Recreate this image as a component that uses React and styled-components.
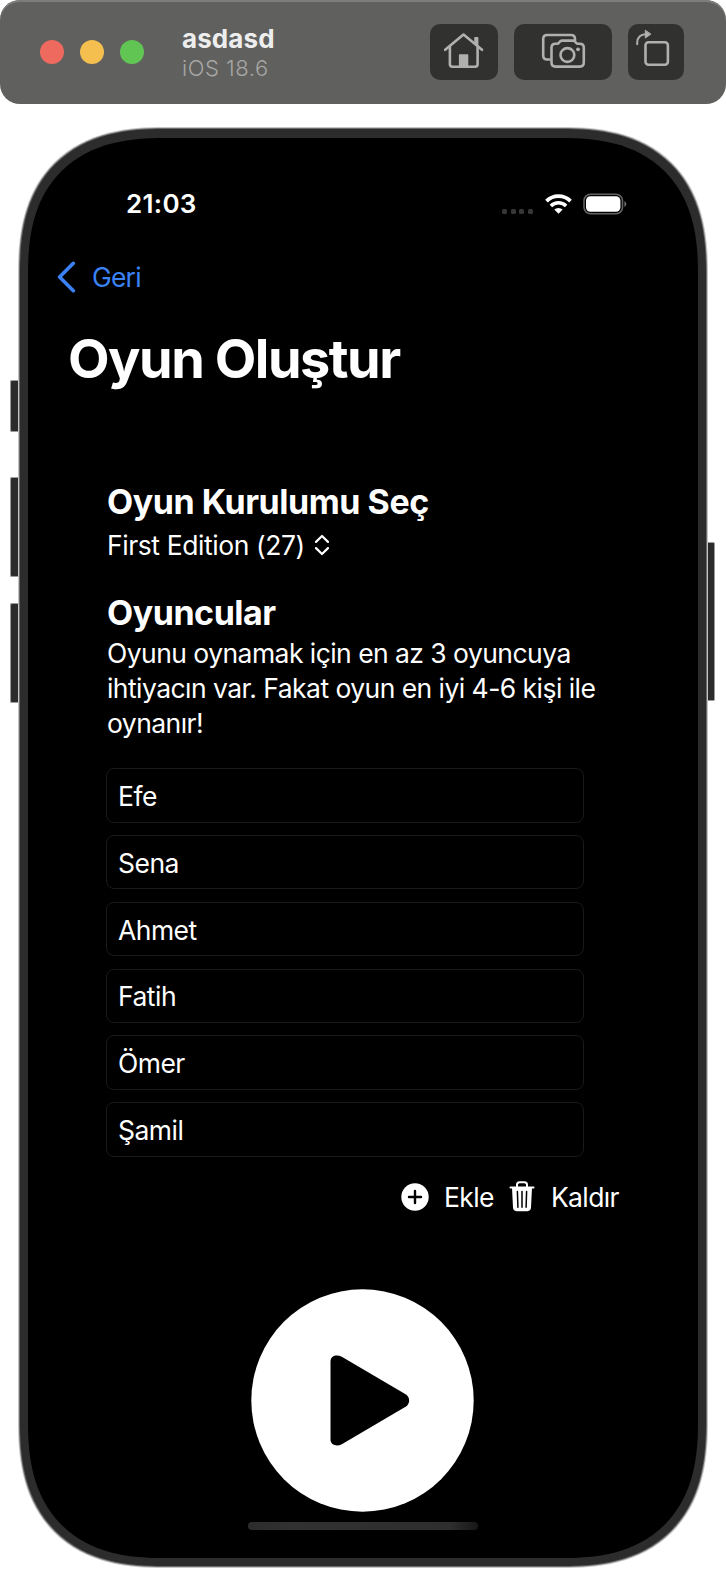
import React from "react";
import styled, { createGlobalStyle, css } from "styled-components";

const GlobalStyle = createGlobalStyle`
  * { box-sizing: border-box; }
  body {
    margin: 0;
    background: #fff;
    font-family: Inter, "Liberation Sans", sans-serif;
    color: #fff;
  }
  button { font: inherit; color: inherit; border: 0; padding: 0; background: none; }
  h1, h2, p { margin: 0; }
  svg { display: block; flex: none; }
`;

/* Continuous corner, with a plain round one where corner-shape is missing */
const deviceCorner = (inset) => css`
  border-radius: ${124 - inset}px;
  @supports (corner-shape: superellipse(1.3)) {
    border-radius: ${146 - inset}px;
    corner-shape: superellipse(1.3);
  }
`;

const Page = styled.div`
  width: 726px;
  height: 1572px;
  overflow: hidden;
`;

/* Simulator window bar */
const TitleBar = styled.header`
  display: flex;
  align-items: center;
  height: 104px;
  padding: 0 42px 0 40px;
  border-radius: 20px;
  background: #60605e;
  box-shadow: inset 0 2px 0 #7d7d7b;
`;

const Lights = styled.div`
  display: flex;
  gap: 16px;
`;

const Light = styled.span`
  width: 24px;
  height: 24px;
  border-radius: 50%;
  background: ${(p) => p.$color};
`;

const WindowInfo = styled.div`
  flex: 1;
  margin-left: 38px;
  padding-top: 2px;
`;

const WindowName = styled.div`
  font-size: 26px;
  line-height: 30px;
  font-weight: 700;
  letter-spacing: 0.1px;
  color: #ededed;
`;

const WindowOs = styled.div`
  font-size: 22px;
  line-height: 28px;
  font-weight: 300;
  letter-spacing: 0.55px;
  color: #a6a6a5;
`;

const Tools = styled.div`
  display: flex;
  gap: 16px;
`;

const Tool = styled.button`
  width: ${(p) => p.$width}px;
  height: 56px;
  border-radius: 10px;
  background: #31312f;
  color: #b0b0ae;
`;

/* Device */
const Device = styled.div`
  display: flex;
  margin: 23px 0 0 10px;
`;

const Keys = styled.div`
  display: flex;
  flex-direction: column;
  width: ${(p) => p.$width}px;
  padding-top: ${(p) => p.$top}px;
`;

const Key = styled.span`
  height: ${(p) => p.$height}px;
  margin-bottom: ${(p) => p.$after || 0}px;
  background: #2b2b2b;
  border: 1px solid #9a9a9a;
  border-width: ${(p) => (p.$side === "right" ? "1px 1px 1px 0" : "1px 0 1px 1px")};
  border-radius: ${(p) => (p.$side === "right" ? "0 2px 2px 0" : "2px 0 0 2px")};
`;

const Shell = styled.div`
  width: 690px;
  height: 1441px;
  padding: 1px;
  ${deviceCorner(0)}
  background: #c4c4c4;
`;

const Rim = styled.div`
  height: 100%;
  padding: 1px;
  ${deviceCorner(1)}
  background: #6a6a6a;
`;

const Bezel = styled.div`
  height: 100%;
  padding: 9px 8px 8px;
  ${deviceCorner(2)}
  background: #2c2c2c;
`;

const Screen = styled.main`
  display: flex;
  flex-direction: column;
  height: 100%;
  padding-top: 46px;
  ${deviceCorner(10)}
  background: #000;
`;

const StatusBar = styled.div`
  display: flex;
  align-items: center;
  height: 40px;
  padding: 0 71px 0 98px;
`;

const Clock = styled.span`
  flex: 1;
  margin-top: -1px;
  font-size: 26px;
  font-weight: 600;
  letter-spacing: 0.3px;
`;

const Cellular = styled.div`
  display: flex;
  gap: 3.6px;
  margin: 14px 12px 0 0;
`;

const CellDot = styled.i`
  width: 5px;
  height: 5px;
  border-radius: 1.5px;
  background: #363636;
`;

const BatterySlot = styled.div`
  margin-left: 11px;
`;

const BackLink = styled.button`
  display: flex;
  align-items: center;
  gap: 16px;
  height: 40px;
  margin: 32.5px 0 0 29px;
  font-size: 26.5px;
  font-weight: 400;
  letter-spacing: -0.8px;
  color: #3b82f6;
`;

const PageTitle = styled.h1`
  margin: 30.5px 0 0 40px;
  font-size: 54px;
  line-height: 64px;
  font-weight: 700;
  letter-spacing: -1.5px;
`;

const Form = styled.section`
  display: flex;
  flex-direction: column;
  margin: 91px 74px 0 79px;
`;

const SectionTitle = styled.h2`
  margin-top: ${(p) => p.$top || 0}px;
  font-size: 34px;
  line-height: 40px;
  font-weight: 700;
  letter-spacing: -0.47px;
`;

const Picker = styled.button`
  display: flex;
  align-items: center;
  gap: 9px;
  height: 36px;
  margin-top: 5px;
  font-size: 26.5px;
  letter-spacing: -0.42px;
`;

const Hint = styled.p`
  margin: 3px 0 27.3px;
  font-size: 26.5px;
  line-height: 35px;
  letter-spacing: -0.55px;
  white-space: nowrap;
`;

const Players = styled.div`
  display: flex;
  flex-direction: column;
  gap: 12.4px;
  width: 478px;
  margin-left: -1px;
`;

const PlayerField = styled.div`
  display: flex;
  align-items: center;
  height: 54.4px;
  padding: 1px 11px 0;
  border: 1px solid #1a1a1a;
  border-radius: 8px;
  font-size: 26.5px;
  letter-spacing: -0.52px;
`;

const Actions = styled.div`
  display: flex;
  align-items: center;
  justify-content: flex-end;
  gap: 15px;
  height: 32px;
  margin: 24px 5px 0 0;
`;

const Action = styled.button`
  display: flex;
  align-items: center;
  gap: ${(p) => p.$gap}px;
  font-size: 26.5px;
  letter-spacing: -0.6px;
`;

const PlayButton = styled.button`
  align-self: center;
  margin: 76.5px 1px 0 0;
`;

const HomeIndicator = styled.div`
  align-self: center;
  width: 230px;
  height: 8px;
  margin-top: 10px;
  border-radius: 4px;
  background: linear-gradient(90deg, #2c2c2c, #313131 20%, #2e2e2e 88%, #171717);
`;

const HomeIcon = () => (
  <svg width="68" height="56" viewBox="0 0 68 56" fill="none" stroke="currentColor" strokeWidth="2.6" strokeLinecap="round" strokeLinejoin="round">
    <path d="M15.2 25.8 33.5 10.5 52 25.8" />
    <path d="M19.9 23v17.3c0 1.6.8 2.4 2.4 2.4h22.9c1.6 0 2.4-.8 2.4-2.4V23" />
    <path d="M29.6 31h8v11.5h-8z" fill="currentColor" strokeWidth="1.4" />
    <path d="M45 13.9h2.6v7.8L45 19.5z" fill="currentColor" strokeWidth="1.6" />
  </svg>
);

const ScreenshotIcon = () => (
  <svg width="98" height="56" viewBox="0 0 98 56" fill="none" stroke="currentColor" strokeWidth="2.6" strokeLinecap="round" strokeLinejoin="round">
    <path d="M35.5 35.5h-2.3c-2.6 0-4-1.4-4-4V15c0-2.600 1.400-4 4-4h23.800c2.600 0 4 1.400 4 4v1.500" />
    <path d="M41.500 19.800h1.500c1 0 1.500-.3 2-1l.8-1c.6-.9 1.200-1.200 2.200-1.200h11c1 0 1.600.3 2.200 1.200l.8 1c.5.7 1 1 2 1h1.800c2.600 0 4 1.400 4 4v14.800c0 2.600-1.400 4-4 4H41.500c-2.600 0-4-1.400-4-4V23.800c0-2.600 1.400-4 4-4Z" />
    <circle cx="53.4" cy="31" r="6.9" />
    <circle cx="64" cy="25.3" r="1.9" fill="currentColor" stroke="none" />
  </svg>
);

const RotateIcon = () => (
  <svg width="56" height="56" viewBox="0 0 56 56" fill="none" stroke="currentColor" strokeWidth="2.6" strokeLinecap="round" strokeLinejoin="round">
    <rect x="17.5" y="18.2" width="22.4" height="22.6" rx="3" />
    <path d="M9.2 20.2v-1.6c0-5.2 3.6-8.4 8.2-8.4" strokeWidth="2" />
    <path d="M17.3 6.6v7.4l5.3-3.7z" fill="currentColor" strokeWidth="1" />
  </svg>
);

const WifiIcon = () => (
  <svg width="27" height="20" viewBox="0 0 27 20" fill="none" stroke="#fff" strokeWidth="3.8">
    <path d="M1.5 7.1a17 17 0 0 1 24 0" />
    <path d="M5.900 11.900a10.700 10.700 0 0 1 15.200 0" strokeWidth="3.5" />
    <path d="M13.500 19.800 9.300 15.600a6 6 0 0 1 8.400 0z" fill="#fff" stroke="none" />
  </svg>
);

const BatteryIcon = () => (
  <svg width="44" height="22" viewBox="0 0 44 22" fill="none">
    <rect x="1" y="1.2" width="38.5" height="19.6" rx="6.5" stroke="#626262" strokeWidth="1.6" />
    <rect x="3" y="3.3" width="34.4" height="15.4" rx="4.4" fill="#fff" />
    <path d="M41.4 8.3v5.6c1.2-.5 1.9-1.5 1.900-2.800s-.7-2.300-1.900-2.800z" fill="#6b6b6b" />
  </svg>
);

const BackIcon = () => (
  <svg width="19" height="32" viewBox="0 0 19 32" fill="none" stroke="currentColor" strokeWidth="3.6" strokeLinecap="round" strokeLinejoin="round">
    <path d="M16.3 2.3 2.6 16l13.7 13.7" />
  </svg>
);

const UpDownIcon = () => (
  <svg width="16" height="22" viewBox="0 0 16 22" fill="none" stroke="#fff" strokeWidth="2.2" strokeLinecap="round" strokeLinejoin="round">
    <path d="M2 7.9 8 2l6 5.9M2 14.1 8 20l6-5.9" />
  </svg>
);

const PlusIcon = () => (
  <svg width="28" height="28" viewBox="0 0 28 28">
    <circle cx="14" cy="14" r="13.7" fill="#fff" />
    <path d="M14 8v12M8 14h12" stroke="#000" strokeWidth="2.4" strokeLinecap="round" />
  </svg>
);

const TrashIcon = () => (
  <svg width="26" height="31" viewBox="0 0 26 31" fill="none" strokeLinecap="round">
    <path d="M8 6V3.800C8 2.200 9 1.300 10.600 1.300h4.800C17 1.300 18 2.200 18 3.800V6" stroke="#fff" strokeWidth="2" />
    <path d="M1.500 6.500h23" stroke="#fff" strokeWidth="2" />
    <path d="M3 7h20l-1 19.600c-.1 2.200-1.500 3.600-3.600 3.600H7.600C5.500 30.200 4.100 28.800 4 26.600z" fill="#fff" />
    <path d="m8.400 10.500.5 15.800M13 10.500v15.800M17.600 10.500l-.5 15.800" stroke="#000" strokeWidth="1.5" />
  </svg>
);

const PlayIcon = () => (
  <svg width="223" height="223" viewBox="0 0 223 223">
    <circle cx="111.5" cy="111.5" r="111.2" fill="#fff" />
    <path d="M79.500 72.500c0-5.800 6.300-7.200 11.300-4.700l64.200 37.700c4.200 2.700 4.200 9.300 0 12L90.800 155.200c-5 2.500-11.300 1.100-11.300-4.700z" fill="#000" />
  </svg>
);

const PLAYERS = ["Efe", "Sena", "Ahmet", "Fatih", "Ömer", "Şamil"];

export default function App() {
  return (
    <Page>
      <GlobalStyle />
      <TitleBar>
        <Lights>
          <Light $color="#ee6a5f" />
          <Light $color="#f5bf4f" />
          <Light $color="#61c554" />
        </Lights>
        <WindowInfo>
          <WindowName>asdasd</WindowName>
          <WindowOs>iOS 18.6</WindowOs>
        </WindowInfo>
        <Tools>
          <Tool $width={68} aria-label="Home"><HomeIcon /></Tool>
          <Tool $width={98} aria-label="Screenshot"><ScreenshotIcon /></Tool>
          <Tool $width={56} aria-label="Rotate"><RotateIcon /></Tool>
        </Tools>
      </TitleBar>

      <Device>
        <Keys $width={8} $top={253}>
          <Key $height={52} $after={45} />
          <Key $height={100} $after={26} />
          <Key $height={100} />
        </Keys>
        <Shell>
          <Rim>
            <Bezel>
              <Screen>
                <StatusBar>
                  <Clock>21:03</Clock>
                  <Cellular>
                    <CellDot />
                    <CellDot />
                    <CellDot />
                    <CellDot />
                  </Cellular>
                  <WifiIcon />
                  <BatterySlot><BatteryIcon /></BatterySlot>
                </StatusBar>
                <BackLink><BackIcon />Geri</BackLink>
                <PageTitle>Oyun Oluştur</PageTitle>
                <Form>
                  <SectionTitle>Oyun Kurulumu Seç</SectionTitle>
                  <Picker>First Edition (27)<UpDownIcon /></Picker>
                  <SectionTitle $top={30}>Oyuncular</SectionTitle>
                  <Hint>
                    Oyunu oynamak için en az 3 oyuncuya<br />
                    ihtiyacın var. Fakat oyun en iyi 4-6 kişi ile<br />
                    oynanır!
                  </Hint>
                  <Players>
                    {PLAYERS.map((name) => (
                      <PlayerField key={name}>{name}</PlayerField>
                    ))}
                  </Players>
                  <Actions>
                    <Action $gap={15}><PlusIcon />Ekle</Action>
                    <Action $gap={16}><TrashIcon />Kaldır</Action>
                  </Actions>
                </Form>
                <PlayButton aria-label="Başlat"><PlayIcon /></PlayButton>
                <HomeIndicator />
              </Screen>
            </Bezel>
          </Rim>
        </Shell>
        <Keys $width={7} $top={415}>
          <Key $side="right" $height={159} />
        </Keys>
      </Device>
    </Page>
  );
}
